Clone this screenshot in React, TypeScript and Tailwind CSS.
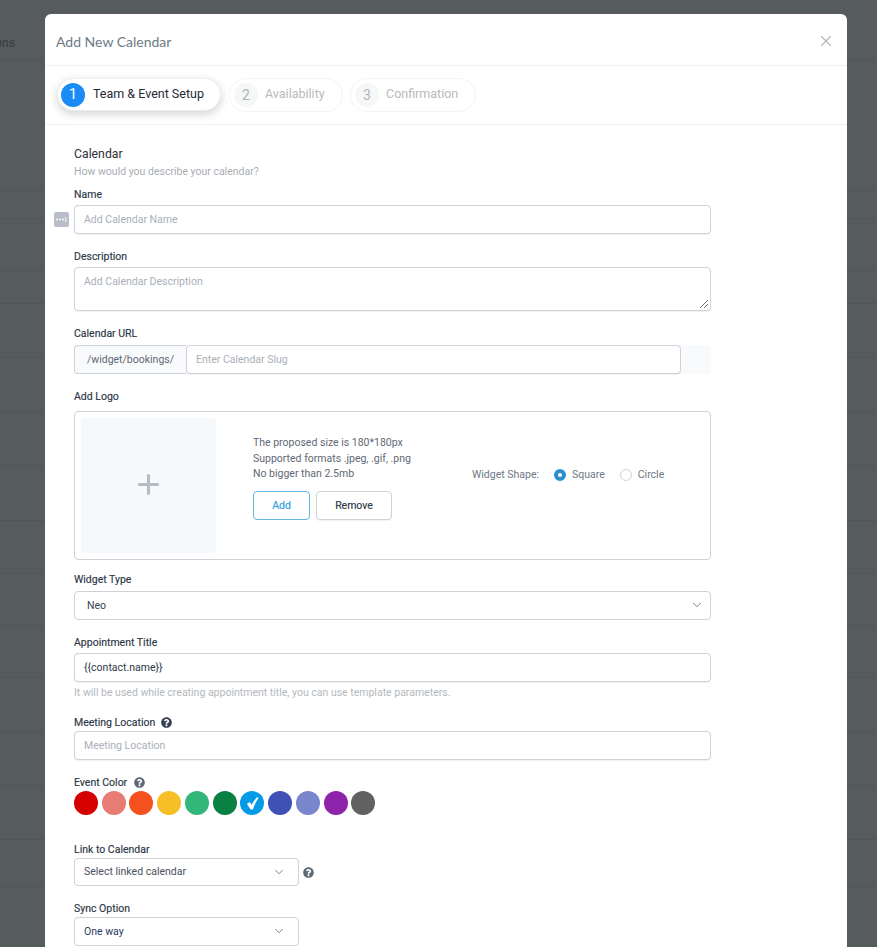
import { ChevronDown, X, Plus } from 'lucide-react';
import { FaQuestionCircle } from 'react-icons/fa';

const rowHeights = [130, 28, 52, 33, 54, 55, 53, 55, 53, 52, 52, 54, 54, 54, 47];

const eventColors = [
  { color: 'bg-[#d50000]', gap: 'mr-[4px]' },
  { color: 'bg-[#e67c73]', gap: 'mr-[3px]' },
  { color: 'bg-[#f4511e]', gap: 'mr-[4px]' },
  { color: 'bg-[#f6bf26]', gap: 'mr-[4px]' },
  { color: 'bg-[#33b679]', gap: 'mr-[4px]' },
  { color: 'bg-[#0b8043]', gap: 'mr-[3px]' },
  { color: 'bg-[#039be5]', gap: 'mr-[4px]', selected: true },
  { color: 'bg-[#3f51b5]', gap: 'mr-[4px]' },
  { color: 'bg-[#7986cb]', gap: 'mr-[4px]' },
  { color: 'bg-[#8e24aa]', gap: 'mr-[3px]' },
  { color: 'bg-[#616161]', gap: '' },
];

function Label({ children, className = '' }: { children: React.ReactNode; className?: string }) {
  return <div className={`h-[18px] text-[10.5px] leading-[20px] text-[#2d3748] [-webkit-text-stroke:0.15px_#2d3748] ${className}`}>{children}</div>;
}

function Input({ placeholder, value }: { placeholder?: string; value?: string }) {
  return (
    <div className="h-[29px] rounded-[4px] border border-[#ced1d9] shadow-[0_1px_1px_rgba(0,0,0,0.06)] bg-white px-[9px] flex items-center text-[10.5px]">
      {value ? <span className="text-[#2d3748]">{value}</span> : <span className="text-[#a9afb9]">{placeholder}</span>}
    </div>
  );
}

function Select({ value, className = '', valueClass = '' }: { value: string; className?: string; valueClass?: string }) {
  return (
    <div className={`rounded-[4px] border border-[#ced1d9] bg-white flex items-center justify-between text-[10.5px] ${className}`}>
      <span className={valueClass}>{value}</span>
      <ChevronDown className="w-[14px] h-[14px] text-[#5f6875] mt-[-1px]" strokeWidth={1.4} />
    </div>
  );
}

function Step({ num, label, className }: { num: number; label: string; className: string }) {
  return (
    <div className={`h-[34px] rounded-full border border-[#f3f4f5] flex items-center pl-[4px] ${className}`}>
      <span className="w-[24px] h-[24px] rounded-full bg-[#f6f7f7] text-[#b0b3b8] text-[14px] flex items-center justify-center">{num}</span>
      <span className="ml-[7px] text-[12.5px] text-[#b9babd] mt-[-2px]">{label}</span>
    </div>
  );
}

export default function App() {
  return (
    <div className="relative h-[947px] overflow-hidden bg-[#565b5e] font-['Roboto',sans-serif]">
      {/* Dimmed page behind the modal */}
      <div className="h-[61px] border-b border-[#505558] pt-[34px] ml-[-5px] text-[12.25px] leading-[18px] text-[#383d40]">ons</div>
      {rowHeights.map((h, i) => (
        <div key={i} className="border-b border-[#505558]" style={{ height: h }} />
      ))}

      <div className="absolute left-[45px] top-[14px] w-[802px] h-[960px] bg-white rounded-t-[6px]">
        <div className="h-[52px] border-b border-[#eff0f2] pl-[11px] pr-[12px] pt-[4px] flex items-center justify-between">
          <span className="font-['Lato',sans-serif] text-[14px] text-[#6b7a85]">Add New Calendar</span>
          <X className="w-[18px] h-[18px] text-[#afb7bd] mt-[-2px]" strokeWidth={1.5} />
        </div>

        <div className="h-[59px] border-b border-[#eff0f2] pl-[12px] pt-[12px] flex gap-[8px] items-start">
          <div className="h-[33px] w-[164px] rounded-full bg-white border border-[#eceef0] shadow-[0_3px_10px_rgba(0,0,0,0.18)] flex items-center pl-[3px]">
            <span className="w-[24px] h-[24px] rounded-full bg-[#1a8cf5] text-white text-[15px] flex items-center justify-center">1</span>
            <span className="ml-[8px] text-[12.5px] text-[#1f2937] mt-[-1px]">Team &amp; Event Setup</span>
          </div>
          <Step num={2} label="Availability" className="w-[114px]" />
          <Step num={3} label="Confirmation" className="w-[126px] ml-[-1px]" />
        </div>

        <div className="relative pl-[29px] pt-[19px] w-[666px]">
          <div className="h-[18px] text-[12.25px] leading-[20px] text-[#2d3036]">Calendar</div>
          <div className="h-[18px] text-[10.5px] leading-[20px] text-[#a9adb3]">How would you describe your calendar?</div>

          <Label className="mt-[5px] mb-[2px]">Name</Label>
          <div className="relative">
            <span className="absolute left-[-20px] top-[7px] w-[15px] h-[15px] rounded-[2px] bg-[#b9bdc9] flex items-center justify-center">
              <svg viewBox="0 0 15 15" className="w-[15px] h-[15px]">
                <circle cx="3" cy="7.5" r="0.9" fill="#fff" />
                <circle cx="6" cy="7.5" r="0.9" fill="#fff" />
                <circle cx="9" cy="7.5" r="0.9" fill="#fff" />
                <rect x="11.3" y="5" width="1" height="5" fill="#fff" />
              </svg>
            </span>
            <Input placeholder="Add Calendar Name" />
          </div>

          <Label className="mt-[13px] mb-[2px]">Description</Label>
          <div className="relative h-[44px] rounded-[4px] border border-[#ced1d9] shadow-[0_1px_1px_rgba(0,0,0,0.06)] px-[9px] pt-[6px] text-[10.5px] leading-[16px] text-[#a9afb9]">
            Add Calendar Description
            <svg viewBox="0 0 10 10" className="absolute right-[1px] bottom-[1px] w-[10px] h-[10px]">
              <path d="M1 9 L9 1 M5 9 L9 5" stroke="#555" strokeWidth="0.8" />
            </svg>
          </div>

          <Label className="mt-[13px] mb-[3px]">Calendar URL</Label>
          <div className="flex h-[29px] rounded-[4px] bg-[#f9fafc]">
            <div className="w-[112px] border border-r-0 border-[#ced1d9] rounded-l-[4px] flex items-center justify-center text-[10.5px] text-[#5f6875] bg-[#f9fafb]">/widget/bookings/</div>
            <div className="w-[495px]">
              <div className="h-[29px] rounded-[4px] border border-[#ced1d9] shadow-[0_1px_1px_rgba(0,0,0,0.06)] bg-white px-[9px] flex items-center text-[10.5px] text-[#a9afb9]">Enter Calendar Slug</div>
            </div>
          </div>

          <Label className="mt-[13px] mb-[6px]">Add Logo</Label>
          <div className="h-[149px] rounded-[4px] border border-[#ced1d9] flex items-center pl-[6px]">
            <div className="w-[135px] h-[135px] rounded-[3px] bg-[#f6f9fc] flex items-center justify-center">
              <Plus className="w-[31px] h-[31px] text-[#b5bdc4] mt-[-2px]" strokeWidth={2.4} />
            </div>
            <div className="ml-[37px] w-[219px] self-start text-[10.5px] leading-[15.5px] text-[#5f6875] pt-[23px]">
              <div>The proposed size is 180*180px</div>
              <div>Supported formats .jpeg, .gif, .png</div>
              <div>No bigger than 2.5mb</div>
              <div className="flex gap-[6px] mt-[9px]">
                <div className="w-[57px] h-[29px] pt-[1px] rounded-[4px] border border-[#68b3e3] text-[#2d9cdb] [-webkit-text-stroke:0.15px_#2d9cdb] flex items-center justify-center">Add</div>
                <div className="w-[76px] h-[29px] pt-[1px] rounded-[4px] border border-[#ced1d9] shadow-[0_1px_1px_rgba(0,0,0,0.06)] text-[#2d3748] [-webkit-text-stroke:0.15px_#2d3748] flex items-center justify-center">Remove</div>
              </div>
            </div>
            <div className="flex items-center text-[10.5px] text-[#6e7885] mt-[-22px]">
              <span>Widget Shape:</span>
              <span className="ml-[15px] w-[12px] h-[12px] rounded-full border-[4px] border-[#2b8fcf] bg-white" />
              <span className="ml-[6px]">Square</span>
              <span className="ml-[15px] w-[12px] h-[12px] rounded-full border border-[#ced1d9]" />
              <span className="ml-[6px]">Circle</span>
            </div>
          </div>

          <Label className="mt-[10px] mb-[3px]">Widget Type</Label>
          <Select value="Neo" className="h-[29px] pl-[12px] pr-[6px]" valueClass="text-[#3c4350]" />

          <Label className="mt-[13px] mb-[2px]">Appointment Title</Label>
          <Input value="{{contact.name}}" />
          <div className="mt-[1px] h-[18px] text-[10.5px] leading-[20px] text-[#b3b9be]">It will be used while creating appointment title, you can use template parameters.</div>

          <Label className="mt-[12px] pt-[2px] flex items-center">
            Meeting Location
            <FaQuestionCircle className="ml-[6px] mt-[-2px] w-[11px] h-[11px] text-[#374151]" />
          </Label>
          <Input placeholder="Meeting Location" />

          <Label className="mt-[13px] pt-[2px] flex items-center">
            Event Color
            <FaQuestionCircle className="ml-[7px] mt-[-2px] w-[11px] h-[11px] text-[#5f6875]" />
          </Label>
          <div className="flex">
            {eventColors.map((c, i) => (
              <div key={i} className={`w-[24px] h-[24px] rounded-full flex items-center justify-center ${c.color} ${c.gap}`}>
                {c.selected && (
                  <svg viewBox="0 0 14 15" className="w-[13px] h-[14px]">
                    <path d="M1 8.5 L4 6.5 L6 9.5 Q8.5 5 12 1 L13.5 2 Q9.5 7.5 7.5 14.5 L5 14.5 Z" fill="#fff" />
                  </svg>
                )}
              </div>
            ))}
          </div>

          <Label className="mt-[25px]">Link to Calendar</Label>
          <div className="flex items-center">
            <Select value="Select linked calendar" className="w-[225px] h-[28px] pl-[9px] pr-[12px]" valueClass="text-[#4a5160]" />
            <FaQuestionCircle className="ml-[4px] w-[11px] h-[11px] text-[#5f6875]" />
          </div>

          <Label className="mt-[13px]">Sync Option</Label>
          <Select value="One way" className="w-[225px] h-[29px] pl-[9px] pr-[12px]" valueClass="text-[#1e3a5f]" />
        </div>
      </div>
    </div>
  );
}
